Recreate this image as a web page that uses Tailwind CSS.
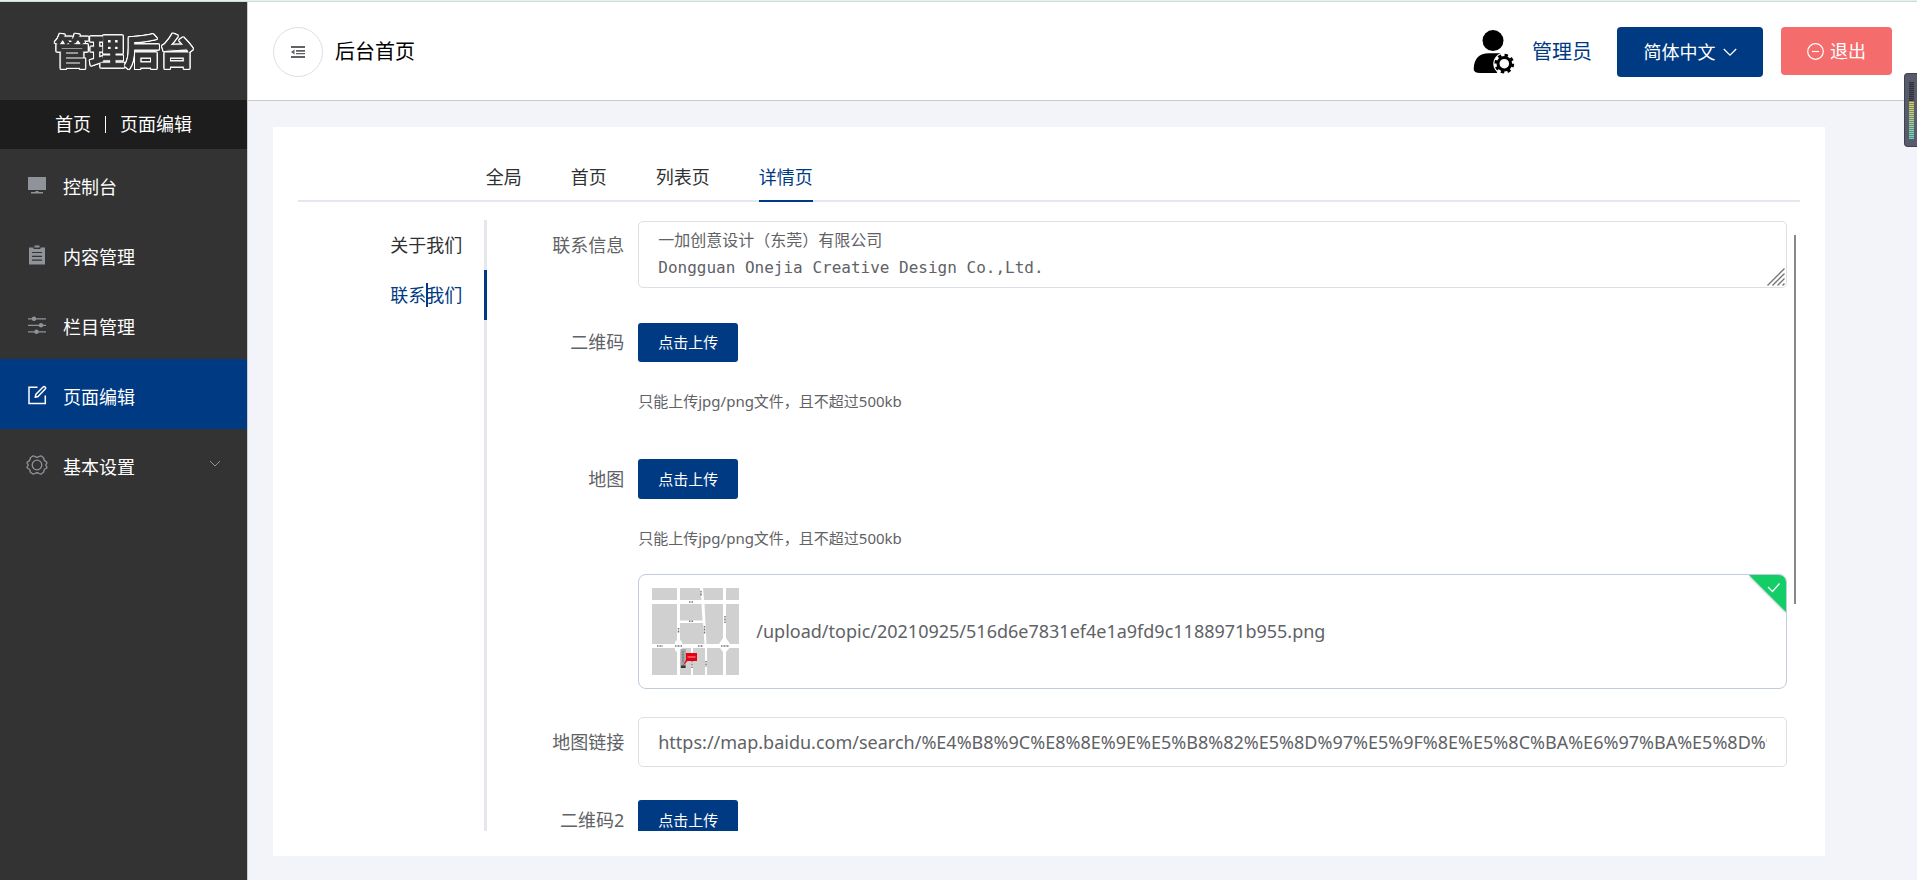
<!DOCTYPE html>
<html lang="zh-CN">
<head>
<meta charset="utf-8">
<title>管理后台</title>
<script src="https://cdn.jsdelivr.net/npm/@tailwindcss/browser@4"></script>
</head>
<body class="flex h-screen flex-col overflow-hidden bg-[#f3f4fa] font-['Noto_Sans','Noto_Sans_CJK_SC',sans-serif] text-[18px] text-[#303133]">
<div class="h-[2px] shrink-0 border-b border-[#c9dcd8] bg-[#e6f2ef]"></div>
<div class="flex min-h-0 flex-1">

  <aside class="flex w-[248px] shrink-0 flex-col border-r border-[#cccccc] bg-[#333333] text-white">
    <div class="flex h-[98px] items-center justify-center pl-[2px]">
      <h1 class="text-[35px] leading-none font-bold text-[#333333] [-webkit-text-stroke:1px_#333333] [filter:drop-shadow(1px_0_0_#fff)_drop-shadow(-1px_0_0_#fff)_drop-shadow(0_1px_0_#fff)_drop-shadow(0_-1px_0_#fff)]">管理后台</h1>
    </div>
    <nav aria-label="面包屑" class="flex h-[49px] items-center justify-center gap-[14px] bg-[#1d1d1d]">
      <a href="#">首页</a>
      <span class="h-[17px] w-px bg-white"></span>
      <a href="#">页面编辑</a>
    </nav>
    <nav aria-label="主菜单" class="flex flex-col">
      <a href="#" class="flex h-[70px] items-center gap-4 pt-[2px] pr-[26px] pl-[27px]">
        <svg class="size-5 text-[#909399]" viewBox="0 0 20 20" fill="currentColor"><path d="M1 2h18v13H1zM8.500 16h3v1h4.500v1.500H4V17h4.500z"/></svg>
        <span class="flex-1 pt-1">控制台</span>
      </a>
      <a href="#" class="flex h-[70px] items-center gap-4 pt-[2px] pr-[26px] pl-[27px]">
        <svg class="size-5 text-[#909399]" viewBox="0 0 20 20"><path fill="currentColor" d="M2 2.500h4.500V4h7V2.500H18V19.500H2zM7.500 .5h5v2h-5z"/><path stroke="#333" stroke-width="1.200" d="M5 7.500h10M5 11.300h10M5 15.100h10"/></svg>
        <span class="flex-1 pt-1">内容管理</span>
      </a>
      <a href="#" class="flex h-[70px] items-center gap-4 pt-[2px] pr-[26px] pl-[27px]">
        <svg class="size-5 text-[#909399]" viewBox="0 0 20 20" fill="currentColor"><path d="M1 3.200h18v1.200H1zM1 9.700h18v1.200H1zM1 16.200h18v1.200H1z"/><circle cx="7" cy="3.800" r="2.200"/><circle cx="14" cy="10.300" r="2.200"/><circle cx="9.500" cy="16.800" r="2.200"/></svg>
        <span class="flex-1 pt-1">栏目管理</span>
      </a>
      <a href="#" aria-current="page" class="flex h-[70px] items-center gap-4 bg-[#003a83] pt-[2px] pr-[26px] pl-[27px]">
        <svg class="size-5" viewBox="0 0 20 20" fill="none" stroke="currentColor" stroke-width="1.500"><path d="M10.500 2.200H2v16.300h16.300V10.500"/><path stroke-linejoin="round" d="M8.200 12.300l.7-3 7.200-7.300q1-.9 2 0t.1 2l-7.200 7.500z"/></svg>
        <span class="flex-1 pt-1">页面编辑</span>
      </a>
      <a href="#" class="flex h-[70px] items-center gap-4 pt-[2px] pr-[26px] pl-[27px]">
        <svg class="size-5 overflow-visible text-[#909399]" viewBox="0 0 20 20" fill="none" stroke="currentColor" stroke-width="1.300"><path stroke-linejoin="round" d="M6.200 .8L8 1.500Q10 3 12 1.500L13.800 .8 16.600 2.700Q16.600 6 19.800 7V8.500Q17.800 10 19.800 11.500V13Q16.600 14 16.600 17.300L13.800 19.200 12 18.500Q10 17 8 18.500L6.200 19.200 3.400 17.300Q3.400 14 .2 13V11.500Q2.200 10 .2 8.500V7Q3.400 6 3.400 2.700Z"/><circle cx="10" cy="10" r="4.800"/></svg>
        <span class="flex-1 pt-1">基本设置</span>
        <svg class="h-[14px] w-3 text-[#909399]" viewBox="0 0 12 14" fill="none" stroke="currentColor"><path d="M1 3l5 5 5-5"/></svg>
      </a>
    </nav>
  </aside>

  <div class="flex min-w-0 flex-1 flex-col">
    <header class="flex h-[99px] shrink-0 items-center border-b border-[#cccccc] bg-white px-[25px] pt-[2px] text-[20px] text-black">
      <button type="button" aria-label="收起菜单" class="flex size-[50px] items-center justify-center rounded-full border border-[#dcdfe6] text-[#606266]">
        <svg class="size-[14px]" viewBox="0 0 14 14" fill="currentColor"><path d="M0 1h14v2H0zM5 5h9v1.700H5zM5 8h9v1.200H5zM0 11h14v2H0zM0 7l3.500-2.500v5z"/></svg>
      </button>
      <span class="ml-3 flex-1">后台首页</span>
      <svg class="size-[50px]" viewBox="0 0 50 50">
        <circle cx="24" cy="13.600" r="10.500"/>
        <path d="M4.700 42Q5 26.500 20 26.300H31Q32 27 31 28L28 46H11Q4.700 46 4.700 42Z"/>
        <circle cx="35.300" cy="36.700" r="11" fill="#fff"/>
        <circle cx="35.300" cy="36.700" r="6.300" fill="none" stroke="#000" stroke-width="3"/>
        <circle cx="35.300" cy="36.700" r="8.500" fill="none" stroke="#000" stroke-width="2.800" stroke-dasharray="3.338"/>
      </svg>
      <a href="#" class="ml-[13px] text-[#003a83]">管理员</a>
      <button type="button" class="ml-[25px] flex h-[50px] w-[146px] items-center justify-center gap-[7px] rounded-[4px] bg-[#003a83] text-[18px] text-white">简体中文
        <svg class="size-[14px]" viewBox="0 0 14 14" fill="none" stroke="currentColor" stroke-width="1.300"><path d="M.8 4l6.200 6.200L13.200 4"/></svg>
      </button>
      <button type="button" class="mb-[2px] ml-[18px] flex h-12 w-[111px] items-center justify-center gap-[6px] rounded-[4px] bg-[#f56c6c] text-[18px] text-white">
        <svg class="size-[17px]" viewBox="0 0 17 17" fill="none" stroke="currentColor" stroke-width="1.200"><circle cx="8.500" cy="8.500" r="7.800"/><path d="M5 8.500h7"/></svg>退出
      </button>
    </header>

    <main class="flex min-h-0 flex-1 pt-[26px] pr-[92px] pb-6 pl-[25px]">
      <section class="flex min-w-0 flex-1 flex-col bg-white p-[25px]">
        <div role="tablist" class="flex h-[50px] shrink-0 gap-[49px] border-b-2 border-[#e4e7ed] pl-[12.5%]">
          <button type="button" role="tab" class="h-[50px]">全局</button>
          <button type="button" role="tab" class="h-[50px]">首页</button>
          <button type="button" role="tab" class="h-[50px]">列表页</button>
          <button type="button" role="tab" aria-selected="true" class="h-[50px] border-b-2 border-[#003a83] pt-[2px] text-[#003a83]">详情页</button>
        </div>
        <div class="mt-[18px] flex min-h-0 flex-1">
          <div role="tablist" aria-orientation="vertical" class="flex w-[12.6%] shrink-0 flex-col border-r-[3px] border-[#e4e7ed]">
            <button type="button" role="tab" class="h-[50px] pr-[22px] text-right">关于我们</button>
            <button type="button" role="tab" aria-selected="true" class="relative mr-[-3px] h-[50px] border-r-[3px] border-[#003a83] pr-[22px] text-right text-[#003a83]">联系我们<span class="absolute top-[13px] right-[56px] h-6 w-[2px] bg-[#003a83]"></span></button>
          </div>

          <form class="relative min-w-0 flex-1 overflow-hidden pr-[13px] text-[#606266]">
            <div class="absolute top-[15px] right-1 h-[369px] w-[2px] bg-[#888888]"></div>
            <div class="relative flex">
              <label for="info" class="w-[151px] shrink-0 pr-[14px] text-right leading-[50px]">联系信息</label>
              <textarea id="info" class="mt-px h-[67px] min-w-0 flex-1 resize-none overflow-hidden rounded-[5px] border border-[#dcdfe6] px-[19px] py-[5px] font-['DejaVu_Sans_Mono','Noto_Sans_CJK_SC',monospace] text-[16px] leading-[27px]">一加创意设计（东莞）有限公司
Dongguan Onejia Creative Design Co.,Ltd.</textarea>
              <svg class="absolute right-[2px] bottom-[2px] size-[18px]" viewBox="0 0 18 18" fill="none" stroke="#777" stroke-width="1.400"><path d="M.5 17.500l17-17M5.500 17.500l12-12M10.500 17.500l7-7M15.500 17.500l2-2"/></svg>
            </div>

            <div class="mt-[29px] flex">
              <label for="qr" class="w-[151px] shrink-0 pr-[14px] text-right leading-[50px]">二维码</label>
              <div class="min-w-0 flex-1 pt-[6px] text-[15px]">
                <button id="qr" type="button" class="block h-[39px] w-[100px] rounded-[3px] bg-[#003a83] text-white">点击上传</button>
                <p class="mt-[27px] leading-6">只能上传jpg/png文件，且不超过500kb</p>
              </div>
            </div>

            <div class="mt-[41px] flex">
              <label for="map" class="w-[151px] shrink-0 pr-[14px] text-right leading-[50px]">地图</label>
              <div class="min-w-0 flex-1 pt-[5px] text-[15px]">
                <button id="map" type="button" class="block h-10 w-[100px] rounded-[3px] bg-[#003a83] text-white">点击上传</button>
                <p class="mt-[27px] leading-6">只能上传jpg/png文件，且不超过500kb</p>
                <div class="relative mt-6 flex h-[115px] items-center gap-[17px] overflow-hidden rounded-[8px] border border-[#c0ccda] px-[13px]">
                  <svg class="size-[87px] shrink-0" viewBox="0 0 87 87">
                    <path fill="#d0d0d0" d="M0 0H25V12H0zM28 0H48L49.500 12H28zM51 0H71V12H52zM74 0H87V12H74zM0 16H25V52Q23 53 22.500 56H0zM28 16H49.500L50.500 32.500H28zM52.500 16H71V50L67 56H54.500zM74 16H87V56H78L74 50zM28 35H51L52.500 56H30.500Q30 53 28 52zM0 60H22.500Q23 63 25 64V87H0zM30 60H39V87H28V64Q29.500 63 30 60zM41 60H53V87H41zM55 60H68L71 64V87H55zM77.500 60H87V87H74V64z"/>
                    <path fill="#a9a9a9" d="M28.500 61H34V80H28.500z"/>
                    <path fill="none" stroke="#777" stroke-width="1.500" stroke-dasharray="1 .5" d="M37 14h4M37 33.300h4M5 58h6M23 58h7M46 58h5M69 58h8M26.500 40v5M73 28v7M52.500 38v8M49 3v5M54 73v6M40 73v7M31 63v12"/>
                    <path fill="#333" d="M29 77.500h4.500V80H29z"/>
                    <path fill="#e60012" d="M34 65H45V73H35.500L30.500 78 34 72z"/>
                    <path stroke="#f7a0a0" stroke-width="1.200" d="M35.500 69h8"/>
                  </svg>
                  <a href="#" class="truncate text-[18px] text-[#606266]">/upload/topic/20210925/516d6e7831ef4e1a9fd9c1188971b955.png</a>
                  <svg class="absolute top-0 right-0 size-10 drop-shadow-[0_1px_1px_rgba(0,0,0,0.25)]" viewBox="0 0 40 40"><path fill="#13ce66" d="M3 0H40V37z"/><path fill="none" stroke="#fff" stroke-width="1.200" d="M22 12l4.500 4.500L33.500 8.500"/></svg>
                </div>
              </div>
            </div>

            <div class="mt-7 flex">
              <label for="link" class="w-[151px] shrink-0 pr-[14px] text-right leading-[50px]">地图链接</label>
              <input id="link" type="text" class="h-[50px] min-w-0 flex-1 rounded-[5px] border border-[#dcdfe6] px-[19px] text-[18px]" value="https://map.baidu.com/search/%E4%B8%9C%E8%8E%9E%E5%B8%82%E5%8D%97%E5%9F%8E%E5%8C%BA%E6%97%BA%E5%8D%97">
            </div>

            <div class="mt-7 flex">
              <label for="qr2" class="w-[151px] shrink-0 pr-[14px] text-right leading-[50px]">二维码2</label>
              <div class="pt-[5px] text-[15px]">
                <button id="qr2" type="button" class="block h-10 w-[100px] rounded-[3px] bg-[#003a83] text-white">点击上传</button>
              </div>
            </div>
          </form>
        </div>
      </section>
    </main>
  </div>
</div>

<div aria-hidden="true" class="fixed top-[73px] right-0 flex h-[74px] w-[13px] flex-col justify-center rounded-l-[4px] border border-r-0 border-[#3f4250] bg-[#575b6b] pl-1">
  <div class="h-[57px] w-[5px] bg-linear-to-b from-[#30323c] from-33% via-[#d8cf4a] via-34% to-[#5fd6c0] [mask-image:repeating-linear-gradient(#000_0_1px,#0006_1px_2px)]"></div>
</div>
</body>
</html>
